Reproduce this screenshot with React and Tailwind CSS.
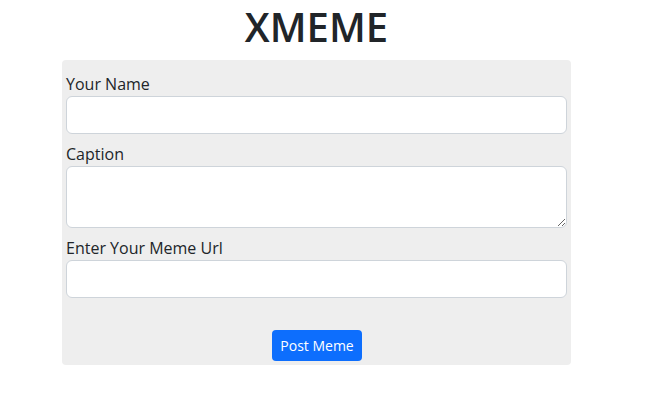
export default function App() {
  return (
    <div className="min-h-[400px] bg-white text-[#212529]" style={{ fontFamily: '"Open Sans", "Noto Sans", sans-serif' }}>
      <div className="ml-[62px] w-[509px] pt-[3px]">
        <h1 className="text-center text-[40px] leading-[1.2] font-semibold mb-[9px]">XMEME</h1>
        <form className="bg-[#eeeeee] rounded px-1 pt-3 pb-1 flex flex-col" onSubmit={(e) => e.preventDefault()}>
          <label className="text-base leading-6">Your Name</label>
          <input type="text" className="h-[38px] w-full bg-white border border-[#ced4da] rounded-md px-3 outline-none" />

          <label className="text-base leading-6 mt-2">Caption</label>
          <textarea className="h-[62px] w-full bg-white border border-[#ced4da] rounded-md px-3 py-1.5 outline-none block" />

          <label className="text-base leading-6 mt-2">Enter Your Meme Url</label>
          <input type="text" className="h-[38px] w-full bg-white border border-[#ced4da] rounded-md px-3 outline-none" />

          <div className="flex justify-center mt-8">
            <button type="submit" className="h-[31px] px-2 bg-[#0d6efd] text-white text-sm rounded ml-[1px]">Post Meme</button>
          </div>
        </form>
      </div>
    </div>
  );
}
